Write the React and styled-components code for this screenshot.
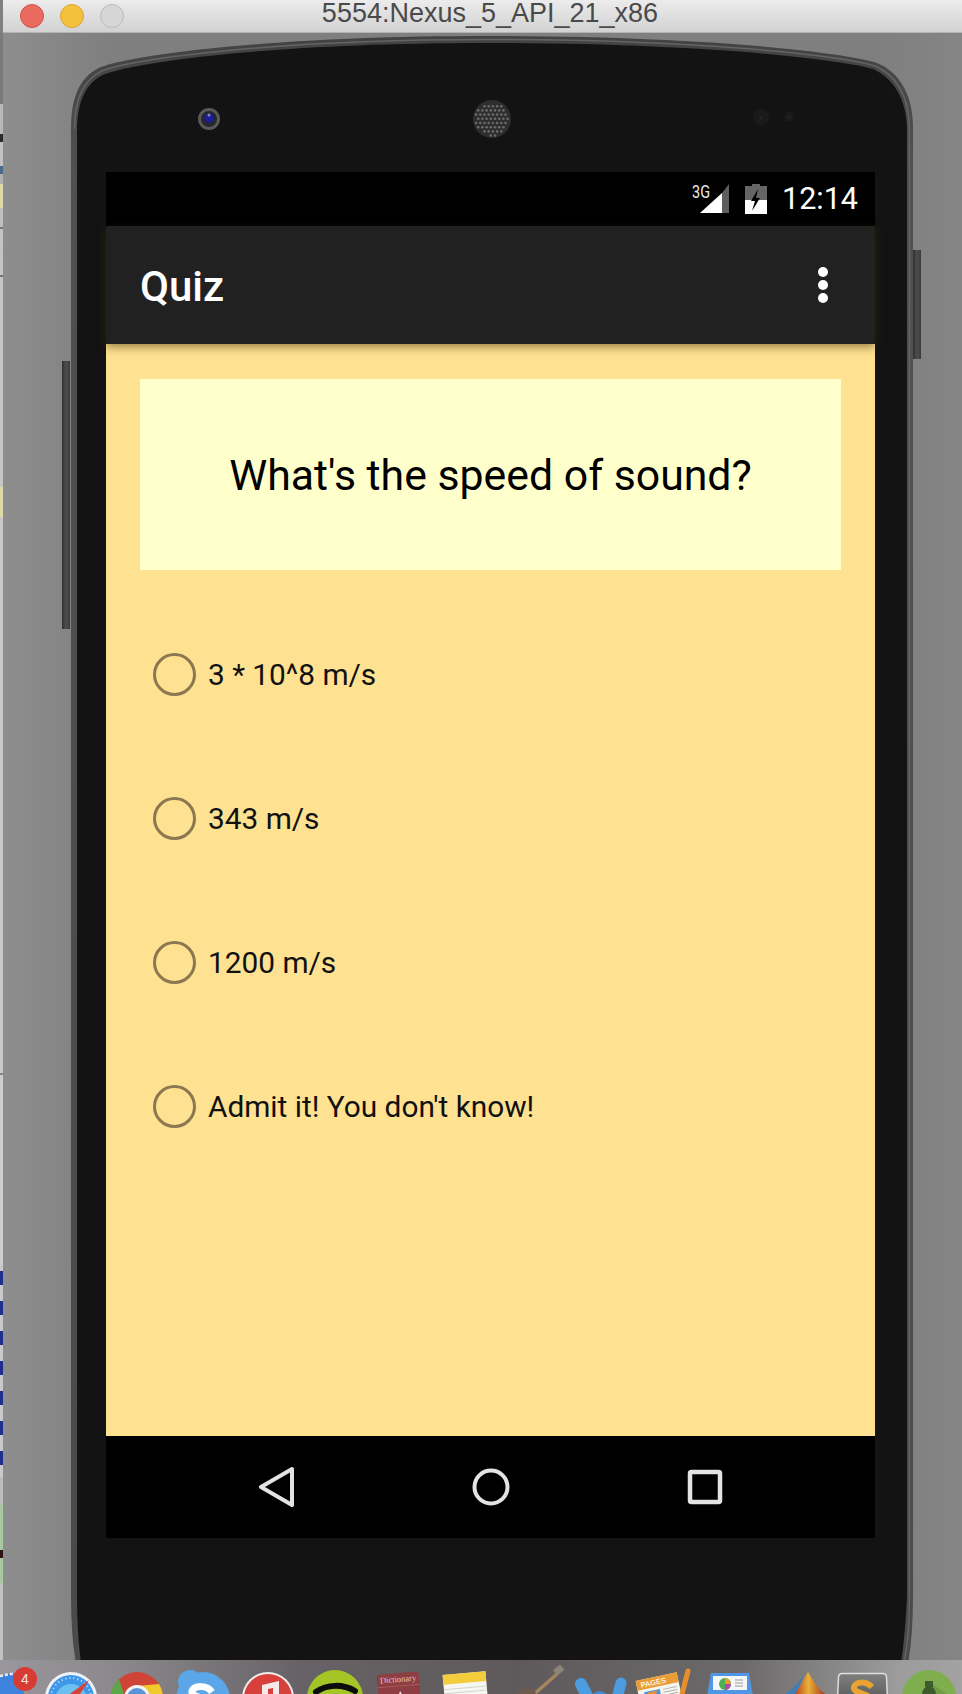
import React from 'react';
import styled, { createGlobalStyle } from 'styled-components';

const GlobalStyle = createGlobalStyle`
  html, body {
    margin: 0;
    padding: 0;
    background: #808080;
  }
`;

const Page = styled.div`
  width: 962px;
  height: 1694px;
  display: flex;
  flex-direction: column;
  overflow: hidden;
  font-family: Roboto, sans-serif;
`;

const TitleBar = styled.div`
  height: 33px;
  flex: none;
  display: flex;
  align-items: center;
  position: relative;
  margin-left: 3px;
  padding-left: 17px;
  gap: 16px;
  box-sizing: border-box;
  background: linear-gradient(#ececec, #d2d2d2);
  border-bottom: 1px solid #b4b4b4;
`;

const TrafficLight = styled.span`
  width: 24px;
  height: 24px;
  border-radius: 50%;
  box-sizing: border-box;
  background: ${(p) => p.$color};
  border: 1px solid ${(p) => p.$edge};
`;

const WindowName = styled.div`
  position: absolute;
  left: 0;
  right: 0;
  top: -2px;
  text-align: center;
  padding-left: 15px;
  font-family: 'Liberation Sans', sans-serif;
  font-size: 27px;
  line-height: 31px;
  color: #4a4a4a;
`;

const Desktop = styled.div`
  flex: 1;
  min-height: 0;
  display: flex;
  overflow: hidden;
  background: linear-gradient(90deg, #8e8e8e 0, #7f7f7f 110px, #7f7f7f 880px, #858585 100%);
`;

const BehindWindow = styled.div`
  width: 3px;
  flex: none;
  display: flex;
  flex-direction: column;
`;

const BehindPiece = styled.div`
  height: ${(p) => p.$h}px;
  background: ${(p) => p.$color};
`;

const Phone = styled.div`
  position: relative;
  flex: none;
  width: 842px;
  height: 1640px;
  margin: 3px 0 0 68px;
`;

const PhoneShell = styled.svg`
  position: absolute;
  left: 0;
  top: 0;
`;

const SideButton = styled.div`
  position: absolute;
  left: ${(p) => p.$left}px;
  top: ${(p) => p.$top}px;
  width: 8px;
  height: ${(p) => p.$h}px;
  background: linear-gradient(90deg, #303030, #4e4e4e 50%, #3a3a3a);
`;

const SensorRow = styled.div`
  position: relative;
  height: 136px;
  padding-top: 30px;
  box-sizing: border-box;
  display: flex;
  align-items: center;
`;

const SensorPart = styled.svg`
  flex: none;
  margin-left: ${(p) => p.$gap}px;
`;

const Screen = styled.div`
  position: relative;
  width: 769px;
  margin-left: 35px;
  display: flex;
  flex-direction: column;
`;

const StatusBar = styled.div`
  height: 54px;
  background: #000;
  display: flex;
  align-items: center;
  justify-content: flex-end;
  padding-right: 17px;
`;

const StatusIcon = styled.svg`
  flex: none;
  overflow: visible;
  margin-right: ${(p) => p.$gap}px;
`;

const Clock = styled.span`
  color: #fff;
  font-size: 30.5px;
  line-height: 30px;
`;

const AppBar = styled.div`
  position: relative;
  z-index: 1;
  height: 118px;
  background: #212121;
  display: flex;
  align-items: center;
  justify-content: space-between;
  padding: 0 47px 0 34px;
  box-shadow: 0 3px 9px rgba(70, 50, 0, 0.55);
`;

const AppTitle = styled.div`
  color: #fff;
  font-size: 42px;
  font-weight: 500;
  padding-top: 2px;
`;

const MenuDots = styled.div`
  display: flex;
  flex-direction: column;
  gap: 3px;
`;

const MenuDot = styled.span`
  width: 10px;
  height: 10px;
  border-radius: 50%;
  background: #fff;
`;

const Content = styled.div`
  height: 1092px;
  box-sizing: border-box;
  background: #fee191;
  padding: 35px 34px 0;
`;

const QuestionCard = styled.div`
  height: 191px;
  background: #ffffcc;
  display: flex;
  align-items: center;
  justify-content: center;
  color: #000;
  font-size: 42.8px;
  box-sizing: border-box;
`;

const Options = styled.div`
  margin-top: 32px;
  padding-left: 13px;
  display: flex;
  flex-direction: column;
`;

const Option = styled.label`
  height: 144px;
  display: flex;
  align-items: center;
  gap: 12px;
  color: #111;
  font-size: 29.8px;
`;

const RadioRing = styled.span`
  width: 43px;
  height: 43px;
  box-sizing: border-box;
  border-radius: 50%;
  border: 3.5px solid #8b7852;
`;

const NavBar = styled.div`
  height: 102px;
  background: #000;
  display: flex;
  align-items: center;
  justify-content: center;
  gap: 176px;
  box-sizing: border-box;
`;

const Dock = styled.div`
  height: 34px;
  flex: none;
  overflow: hidden;
  box-sizing: border-box;
  padding-top: 10px;
  display: flex;
  align-items: flex-start;
  background: linear-gradient(90deg, #9a979c 0, #8b888c 120px, #666265 300px, #5e5a5c 520px, #6c696b 740px, #9c9c9c 900px, #a2a2a2 100%);
`;

const DockIcon = styled.svg`
  flex: none;
  overflow: visible;
  margin-left: ${(p) => p.$gap || 0}px;
`;

const OPTIONS = ['3 * 10^8 m/s', '343 m/s', '1200 m/s', "Admit it! You don't know!"];

const NAVY_DASHES = 'repeating-linear-gradient(#c9c9c9 0 8px, #1f2f90 8px 22px, #c9c9c9 22px 30px)';

const BEHIND = [
  [72, '#7b7b7b'], [30, '#b9b9b9'], [8, '#2a2a2a'], [24, '#c2c2c2'], [8, '#4a6a8a'], [10, '#b0b0b0'],
  [24, '#dcd8a8'], [20, '#c0c0c0'], [2, '#777'], [46, '#c4c4c4'], [2, '#777'], [212, '#c6c6c6'],
  [30, '#dedaa8'], [560, '#c9c9c9'], [2, '#888'], [190, '#cdcdcd'], [216, NAVY_DASHES], [28, '#bcbcbc'],
  [45, '#a8c8a0'], [8, '#301010'], [25, '#a8c8a0'], [78, '#c2c2c2'],
];

const GRILLE = [];
for (let row = 0; row < 9; row++) {
  for (let col = 0; col < 9; col++) {
    const dx = col * 4.2 + (row % 2 ? 2.1 : 0) + 2;
    const dy = row * 4.2 + 3;
    if (Math.hypot(dx - 20, dy - 20) < 17) GRILLE.push([dx, dy]);
  }
}

const App = () => (
  <Page>
    <GlobalStyle />
    <TitleBar>
      <TrafficLight $color="#ea6a60" $edge="#d3524a" />
      <TrafficLight $color="#f4c13f" $edge="#dca52e" />
      <TrafficLight $color="#d6d6d6" $edge="#bcbcbc" />
      <WindowName>5554:Nexus_5_API_21_x86</WindowName>
    </TitleBar>

    <Desktop>
      <BehindWindow>
        {BEHIND.map(([h, color], i) => (
          <BehindPiece key={i} $h={h} $color={color} />
        ))}
      </BehindWindow>

      <Phone>
        <SideButton $left={-9} $top={325} $h={268} />
        <SideButton $left={842} $top={214} $h={109} />
        <PhoneShell width="842" height="1640" viewBox="0 0 842 1640">
          <defs>
            <linearGradient id="rim" x1="0" y1="0" x2="0" y2="1">
              <stop offset="0" stopColor="#424242" />
              <stop offset="0.08" stopColor="#505050" />
              <stop offset="1" stopColor="#4a4a4a" />
            </linearGradient>
          </defs>
          <path
            d="M0 92 C0 56 12 39 30 31 C62 19 200 0 415 0 C630 0 772 16 806 27 C826 35 842 56 842 92 L842 1560 Q842 1612 834 1640 L8 1640 Q0 1612 0 1560 Z"
            fill="url(#rim)"
          />
          <path
            d="M3.5 93 C3.5 59 15 42 32 34.500 C64 23 200 3.500 415 3.500 C630 3.500 770 19.500 804 30 C823 38 838.500 58 838.500 93 L838.500 1560 Q838.500 1610 830 1640"
            fill="none"
            stroke="#646464"
            strokeWidth="1.500"
          />
          <path
            d="M6 95 C6 62 17 45 34 38 C66 26 200 7 415 7 C630 7 768 23 802 33 C820 41 836 60 836 95 L836 1560 Q834 1606 828 1640 L12 1640 Q6 1606 6 1560 Z"
            fill="#131313"
          />
        </PhoneShell>

        <SensorRow>
          <SensorPart $gap={126} width="24" height="24" viewBox="0 0 24 24">
            <circle cx="12" cy="12" r="11" fill="#5a5a5a" />
            <circle cx="12" cy="12" r="8" fill="#26262c" />
            <circle cx="12" cy="11" r="4.500" fill="#1c1ca0" />
            <circle cx="12" cy="8" r="1.500" fill="#8a8ab0" />
          </SensorPart>
          <SensorPart $gap={251} width="40" height="40" viewBox="0 0 40 40">
            <circle cx="20" cy="20" r="19" fill="#2e2e2e" />
            {GRILLE.map(([dx, dy], i) => (
              <circle key={i} cx={dx} cy={dy} r="1.300" fill="#6a6a6a" />
            ))}
          </SensorPart>
          <SensorPart $gap={240} width="44" height="24" viewBox="0 0 44 24">
            <circle cx="9" cy="10" r="8" fill="#1a1a1a" />
            <circle cx="9" cy="11" r="1.500" fill="#352020" />
            <circle cx="37" cy="10" r="5" fill="#1b1a1a" />
            <circle cx="37" cy="10" r="1.500" fill="#352020" />
          </SensorPart>
        </SensorRow>

        <Screen>
          <StatusBar>
            <StatusIcon $gap={15} width="38" height="30" viewBox="0 0 38 30">
              <text x="0" y="14" fill="#e8e8e8" fontFamily="Roboto, sans-serif" fontSize="18" textLength="18" lengthAdjust="spacingAndGlyphs">3G</text>
              <path d="M8 29 L30 29 L30 9 Z" fill="#fff" />
              <path d="M30 29 L37 29 L37 0 L30 9 Z" fill="#5e5e5e" />
            </StatusIcon>
            <StatusIcon $gap={15} width="22" height="30" viewBox="0 0 22 30">
              <path d="M7 0 H15 V2 H22 V30 H0 V2 H7 Z" fill="#666" />
              <rect y="16" width="22" height="14" fill="#fff" />
              <path d="M13 5 L6 17 H10 L7 27 L15 14 H11 Z" fill="#000" />
            </StatusIcon>
            <Clock>12:14</Clock>
          </StatusBar>

          <AppBar>
            <AppTitle>Quiz</AppTitle>
            <MenuDots>
              <MenuDot />
              <MenuDot />
              <MenuDot />
            </MenuDots>
          </AppBar>

          <Content>
            <QuestionCard>What's the speed of sound?</QuestionCard>
            <Options>
              {OPTIONS.map((text) => (
                <Option key={text}>
                  <RadioRing />
                  {text}
                </Option>
              ))}
            </Options>
          </Content>

          <NavBar>
            <svg width="38" height="40" viewBox="0 0 38 40">
              <path d="M34 2 L3 20 L34 38 Z" fill="none" stroke="#e3e3e3" strokeWidth="4" strokeLinejoin="round" />
            </svg>
            <svg width="38" height="40" viewBox="0 0 38 40">
              <circle cx="19" cy="20" r="16.500" fill="none" stroke="#e3e3e3" strokeWidth="4" />
            </svg>
            <svg width="38" height="40" viewBox="0 0 38 40">
              <rect x="4" y="5" width="30" height="30" rx="1.500" fill="none" stroke="#e3e3e3" strokeWidth="4.500" />
            </svg>
          </NavBar>
        </Screen>
      </Phone>
    </Desktop>

    <Dock>
      {/* mail, badge sits on its corner */}
      <DockIcon width="37" height="40" viewBox="0 0 37 40">
        <path d="M-2 6 L18 2 L26 30 L-2 30 Z" fill="#3d82dc" />
        <path d="M0 6 L16 3" stroke="#f0f0f0" strokeWidth="2.500" strokeDasharray="3 2" />
        <circle cx="25" cy="9" r="12" fill="#d83a34" />
        <text x="25" y="14" textAnchor="middle" fill="#f4e6e6" fontFamily="'Liberation Sans', sans-serif" fontSize="14">4</text>
      </DockIcon>
      {/* safari */}
      <DockIcon $gap={8} width="52" height="40" viewBox="0 0 52 40">
        <circle cx="26" cy="28" r="26" fill="#eef2f6" />
        <circle cx="26" cy="28" r="23" fill="#3f97ea" />
        <circle cx="26" cy="30" r="16" fill="#6cc0ef" />
        <circle cx="26" cy="28" r="20" fill="none" stroke="#cfe6fa" strokeWidth="2" strokeDasharray="1 3" />
        <path d="M44 10 L22 26 L30 32 Z" fill="#d8413a" />
      </DockIcon>
      {/* chrome */}
      <DockIcon $gap={14} width="52" height="40" viewBox="0 0 52 40">
        <circle cx="26" cy="28" r="26" fill="#cf4436" />
        <path d="M26 16 L48 14 A26 26 0 0 1 52 28 L26 28 Z" fill="#f0c92f" />
        <path d="M8 9 A26 26 0 0 0 0 28 L14 28 Z" fill="#5da846" />
        <circle cx="26" cy="28" r="13" fill="#f2f2f2" />
        <circle cx="26" cy="28" r="10" fill="#5b93d8" />
      </DockIcon>
      {/* skype */}
      <DockIcon $gap={12} width="55" height="40" viewBox="0 0 55 40">
        <circle cx="15" cy="12" r="12" fill="#5ba6e8" />
        <circle cx="28" cy="29" r="27" fill="#5ba6e8" />
        <path d="M37 22 C32 15 20 15 17 21 C16 25 22 27 28 28" fill="none" stroke="#fff" strokeWidth="7" />
      </DockIcon>
      {/* itunes */}
      <DockIcon $gap={12} width="52" height="40" viewBox="0 0 52 40">
        <circle cx="26" cy="28" r="26" fill="#f0eeee" />
        <circle cx="26" cy="28" r="24" fill="#d8403c" />
        <path d="M20 15 L37 11 L37 30 L31 30 L31 18 L26 19 L26 30 L20 30 Z" fill="#f5eaea" />
      </DockIcon>
      {/* spotify */}
      <DockIcon $gap={13} width="56" height="40" viewBox="0 0 56 40">
        <circle cx="28" cy="28" r="28" fill="#a4c526" />
        <path d="M9 22 C20 14 36 14 48 21" fill="none" stroke="#0c0c0c" strokeWidth="6" strokeLinecap="round" />
      </DockIcon>
      {/* dictionary */}
      <DockIcon $gap={14} width="44" height="40" viewBox="0 0 44 40">
        <g transform="rotate(-5 22 20)">
          <rect x="1" y="3" width="42" height="40" rx="3" fill="#8e3d42" />
          <path d="M1 16 H43" stroke="#a85a5e" strokeWidth="1" />
          <text x="22" y="12" textAnchor="middle" fill="#e2c9c9" fontFamily="'Liberation Serif', serif" fontSize="8.500">Dictionary</text>
          <path d="M19 30 L23 21 L27 30 Z" fill="#f0e6e6" />
          <circle cx="33" cy="28" r="2.500" fill="#f0e6e6" />
        </g>
      </DockIcon>
      {/* notes */}
      <DockIcon $gap={22} width="44" height="40" viewBox="0 0 44 40">
        <g transform="rotate(-5 22 20)">
          <rect x="1" y="3" width="43" height="40" fill="#f6f6f2" />
          <rect x="1" y="3" width="43" height="10" fill="#f3cd3c" />
          <path d="M1 18 H44 M1 22 H44" stroke="#d4d4d0" strokeWidth="1" />
        </g>
      </DockIcon>
      {/* guitar */}
      <DockIcon $gap={33} width="45" height="40" viewBox="0 0 45 40">
        <path d="M12 26 L37 4" stroke="#a58460" strokeWidth="3.500" />
        <rect x="34" y="-3" width="9" height="7" transform="rotate(-40 38 0)" fill="#8c8478" />
        <ellipse cx="7" cy="24" rx="9" ry="6" fill="#6e5a4e" />
      </DockIcon>
      {/* blue three strokes */}
      <DockIcon $gap={7} width="54" height="40" viewBox="0 0 54 40">
        <path d="M9 14 L20 36" stroke="#4c9ce2" strokeWidth="12" strokeLinecap="round" />
        <path d="M49 13 L43 36" stroke="#4c9ce2" strokeWidth="11" strokeLinecap="round" />
        <path d="M22 30 Q27 20 35 30" fill="none" stroke="#3f8ad0" strokeWidth="8" />
      </DockIcon>
      {/* pages */}
      <DockIcon $gap={14} width="50" height="40" viewBox="0 0 50 40">
        <g transform="rotate(-12 20 20)">
          <rect x="-2" y="6" width="42" height="40" fill="#f5f5f0" />
          <rect x="-2" y="6" width="42" height="10" fill="#ea9c35" />
          <text x="2" y="14" fill="#fdf0dc" fontFamily="'Liberation Sans', sans-serif" fontSize="7.500" fontWeight="700">PAGES</text>
          <rect x="4" y="19" width="16" height="12" fill="#4e8fd8" />
          <path d="M7 20 H17 L12 30 Z" fill="#ea9030" />
          <path d="M23 20 H37 M23 23 H37 M23 26 H37" stroke="#b0b0b0" strokeWidth="1" />
        </g>
        <path d="M48 1 L42 24" stroke="#e88f2c" strokeWidth="5" strokeLinecap="round" />
      </DockIcon>
      {/* keynote */}
      <DockIcon $gap={17} width="46" height="40" viewBox="0 0 46 40">
        <path d="M4 3 H42 L46 26 H0 Z" fill="#4f97e4" />
        <rect x="6" y="6" width="34" height="14" fill="#f4f6f8" />
        <circle cx="18" cy="14" r="6" fill="#4cb050" />
        <path d="M18 14 L18 8 A6 6 0 0 1 24 14 Z" fill="#e0a030" />
        <path d="M18 14 L24 14 A6 6 0 0 1 18 20 Z" fill="#b048b0" />
        <path d="M28 10 H36 M28 13 H36 M28 16 H36" stroke="#9a9a9a" strokeWidth="1" />
      </DockIcon>
      {/* matlab */}
      <DockIcon $gap={32} width="40" height="40" viewBox="0 0 40 40">
        <defs>
          <linearGradient id="peak" x1="0" y1="0" x2="1" y2="0">
            <stop offset="0" stopColor="#b8431c" />
            <stop offset="0.45" stopColor="#e9b03c" />
            <stop offset="1" stopColor="#a83a18" />
          </linearGradient>
        </defs>
        <path d="M0 24 Q10 18 18 6 L14 24 Z" fill="#3f7eb4" />
        <path d="M23 2 C27 8 32 18 40 24 L10 24 C15 16 19 8 23 2 Z" fill="url(#peak)" />
      </DockIcon>
      {/* sublime */}
      <DockIcon $gap={12} width="51" height="40" viewBox="0 0 51 40">
        <defs>
          <linearGradient id="slab" x1="0" y1="0" x2="0" y2="1">
            <stop offset="0" stopColor="#808080" />
            <stop offset="1" stopColor="#4e4e4e" />
          </linearGradient>
        </defs>
        <path d="M5 3.500 H46 Q49 3.500 49.500 7 L51 40 H0 L1.500 7 Q2 3.500 5 3.500 Z" fill="url(#slab)" stroke="#dedede" strokeWidth="1.500" />
        <path d="M35 17 C28 10 17 12 17 18 C17 24 32 22 33 30" fill="none" stroke="#eaa232" strokeWidth="6" />
      </DockIcon>
      {/* green circle with bottle */}
      <DockIcon $gap={14} width="54" height="40" viewBox="0 0 54 40">
        <circle cx="27" cy="27" r="27" fill="#7fae4e" />
        <path d="M30 14 L54 30 L54 40 L30 40 Z" fill="#6f9c44" />
        <rect x="23" y="11" width="8" height="6" fill="#3f5a2e" />
        <path d="M20 26 Q20 19 24 17 H30 Q34 19 34 26 V40 H20 Z" fill="#3f5a2e" />
      </DockIcon>
    </Dock>
  </Page>
);

export default App;
